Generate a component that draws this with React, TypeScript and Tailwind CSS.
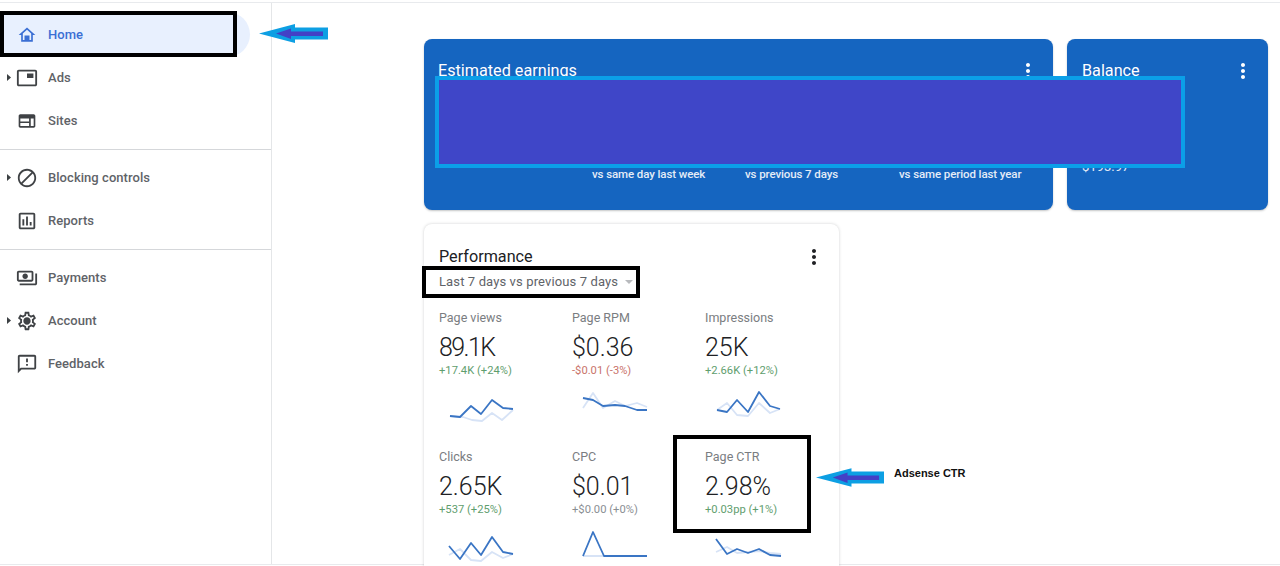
const P = {
  home: "M12 3L2 12h3v8h14v-8h3L12 3zm0 2.69l5 4.5V18H7v-7.81l5-4.5zM9 12.5h6V18H9z",
  ads: "M19 7h-7v5h7V7zm2-4H3c-1.1 0-2 .9-2 2v14c0 1.1.9 1.98 2 1.98h18c1.1 0 2-.88 2-1.98V5c0-1.1-.9-2-2-2zm0 16.01H3V4.98h18v14.03z",
  sites: "M20 4H4c-1.1 0-1.99.9-1.99 2L2 18c0 1.1.9 2 2 2h16c1.1 0 2-.9 2-2V6c0-1.1-.9-2-2-2zM4 9h10.5v3.5H4V9zm0 5.5h10.5V18H4v-3.5zM20 18h-3.5V9H20v9z",
  block: "M12 2C6.48 2 2 6.48 2 12s4.48 10 10 10 10-4.48 10-10S17.52 2 12 2zM4 12c0-4.42 3.58-8 8-8 1.85 0 3.55.63 4.9 1.69L5.69 16.9C4.63 15.55 4 13.85 4 12zm8 8c-1.85 0-3.55-.63-4.9-1.69L18.31 7.1C19.37 8.45 20 10.15 20 12c0 4.42-3.58 8-8 8z",
  reports: "M19 3H5c-1.1 0-2 .9-2 2v14c0 1.1.9 2 2 2h14c1.1 0 2-.9 2-2V5c0-1.1-.9-2-2-2zm0 16H5V5h14v14zM7 10h2v7H7zm4-3h2v10h-2zm4 6h2v4h-2z",
  payments: "M19 14V6c0-1.1-.9-2-2-2H3c-1.1 0-2 .9-2 2v8c0 1.1.9 2 2 2h14c1.1 0 2-.9 2-2zm-2 0H3V6h14v8zm-7-7c-1.66 0-3 1.34-3 3s1.34 3 3 3 3-1.34 3-3-1.34-3-3-3zm13 0v11c0 1.1-.9 2-2 2H4v-2h17V7h2z",
  account: "M19.43 12.98c.04-.32.07-.64.07-.98 0-.34-.03-.66-.07-.98l2.11-1.65c.19-.15.24-.42.12-.64l-2-3.46c-.09-.16-.26-.25-.44-.25-.06 0-.12.01-.17.03l-2.49 1c-.52-.4-1.08-.73-1.69-.98l-.38-2.65C14.46 2.18 14.25 2 14 2h-4c-.25 0-.46.18-.49.42l-.38 2.65c-.61.25-1.17.59-1.69.98l-2.49-1c-.06-.02-.12-.03-.18-.03-.17 0-.34.09-.43.25l-2 3.46c-.13.22-.07.49.12.64l2.11 1.65c-.04.32-.07.65-.07.98 0 .33.03.66.07.98l-2.11 1.65c-.19.15-.24.42-.12.64l2 3.46c.09.16.26.25.44.25.06 0 .12-.01.17-.03l2.49-1c.52.4 1.08.73 1.69.98l.38 2.65c.03.24.24.42.49.42h4c.25 0 .46-.18.49-.42l.38-2.65c.61-.25 1.17-.59 1.69-.98l2.49 1c.06.02.12.03.18.03.17 0 .34-.09.43-.25l2-3.46c.12-.22.07-.49-.12-.64l-2.11-1.65zm-1.98-1.71c.04.31.05.52.05.73 0 .21-.02.43-.05.73l-.14 1.13.89.7 1.08.84-.7 1.21-1.27-.51-1.04-.42-.9.68c-.43.32-.84.56-1.25.73l-1.06.43-.16 1.13-.2 1.35h-1.4l-.19-1.35-.16-1.13-1.06-.43c-.43-.18-.83-.41-1.23-.71l-.91-.7-1.06.43-1.27.51-.7-1.21 1.08-.84.89-.7-.14-1.13c-.03-.31-.05-.54-.05-.74s.02-.43.05-.73l.14-1.13-.89-.7-1.08-.84.7-1.21 1.27.51 1.04.42.9-.68c.43-.32.84-.56 1.25-.73l1.06-.43.16-1.13.2-1.35h1.39l.19 1.35.16 1.13 1.06.43c.43.18.83.41 1.23.71l.91.7 1.06-.43 1.27-.51.7 1.21-1.07.85-.89.7.14 1.13zM12 8c-2.21 0-4 1.79-4 4s1.79 4 4 4 4-1.79 4-4-1.79-4-4-4z",
  feedback: "M20 2H4c-1.1 0-1.99.9-1.99 2L2 22l4-4h14c1.1 0 2-.9 2-2V4c0-1.1-.9-2-2-2zm0 14H5.17L4 17.17V4h16v12zm-9-4h2v2h-2zm0-6h2v4h-2z",
  dots: "M12 8c1.1 0 2-.9 2-2s-.9-2-2-2-2 .9-2 2 .9 2 2 2zm0 2c-1.1 0-2 .9-2 2s.9 2 2 2 2-.9 2-2-.9-2-2-2zm0 6c-1.1 0-2 .9-2 2s.9 2 2 2 2-.9 2-2-.9-2-2-2z",
};

function Icon({ d, className }: { d: string; className: string }) {
  return (
    <svg viewBox="0 0 24 24" fill="currentColor" className={className}>
      <path d={d} fillRule="evenodd" />
    </svg>
  );
}

function NavRow({ icon, label, caret, active, small }: { icon: string; label: string; caret?: boolean; active?: boolean; small?: boolean }) {
  const iconColor = active ? "" : " text-[#3f4245]";
  return (
    <div className={active ? "-my-px flex h-[45px] w-[250px] items-center rounded-r-full bg-[#e8f0fe] text-[#3b6fd4]" : "flex h-[43px] items-center text-[#5f6368]"}>
      <div className="flex w-[16px] shrink-0 justify-end pr-[5px]">
        {caret && (
          <svg viewBox="0 0 4 7" className="h-[7px] w-[4px] text-[#3c4043]" fill="currentColor">
            <path d="M0 0l4 3.5L0 7z" />
          </svg>
        )}
      </div>
      <Icon d={icon} className={(small ? "mx-px h-[20px] w-[20px] shrink-0" : "h-[22px] w-[22px] shrink-0") + iconColor} />
      <span className="ml-[10px] text-[13px] font-medium tracking-[0.05px]">{label}</span>
    </div>
  );
}

type Metric = {
  label: string;
  value: string;
  delta: string;
  tone: string;
  dark: string;
  light: string;
  valueClass?: string;
};

const metrics: Metric[] = [
  {
    label: "Page views", value: "89.1K", delta: "+17.4K (+24%)", tone: "text-[#5f9e6e]", valueClass: "tracking-[-1.6px]",
    dark: "11,28 21,29 32,18 42,26 53,12 64,20 74,21",
    light: "11,28 24,29 33,32 43,33 53,25 63,32 74,22",
  },
  {
    label: "Page RPM", value: "$0.36", delta: "-$0.01 (-3%)", tone: "text-[#c9736a]",
    dark: "11,10 21,12 31,18 43,17 53,18 65,22 75,22",
    light: "11,20 21,5 31,20 43,13 53,18 65,15 75,19",
  },
  {
    label: "Impressions", value: "25K", delta: "+2.66K (+12%)", tone: "text-[#5f9e6e]",
    dark: "12,22 22,24 32,12 43,24 54,4 65,18 75,21",
    light: "12,22 22,15 32,27 43,28 54,15 65,25 75,21",
  },
  {
    label: "Clicks", value: "2.65K", delta: "+537 (+25%)", tone: "text-[#5f9e6e]",
    dark: "10,19 21,32 32,16 42,28 53,10 64,25 74,27",
    light: "10,28 21,22 32,33 42,34 53,25 64,31 74,27",
  },
  {
    label: "CPC", value: "$0.01", delta: "+$0.00 (+0%)", tone: "text-[#8a8e93]",
    dark: "11,29 21,5 32,29 75,29",
    light: "11,29 32,29 75,29",
  },
  {
    label: "Page CTR", value: "2.98%", delta: "+0.03pp (+1%)", tone: "text-[#5f9e6e]",
    dark: "11,12 22,27 32,22 43,26 54,22 65,28 76,29",
    light: "11,25 22,20 32,26 43,25 54,24 65,26 76,27",
  },
];

function MetricCell({ m }: { m: Metric }) {
  return (
    <div className="flex h-[139px] flex-col">
      <div className="h-[18px] text-[12.5px] leading-[18px] text-[#7a7d81]">{m.label}</div>
      <div className={"mt-[6px] h-[30px] text-[25px] font-light leading-[30px] text-[#202124] " + (m.valueClass ?? "")}>{m.value}</div>
      <div className={"mt-px h-[14px] text-[11.2px] leading-[14px] " + m.tone}>{m.delta}</div>
      <svg viewBox="0 0 110 36" className="mt-[10px] h-[36px] w-[110px]" fill="none" strokeLinejoin="round">
        <polyline points={m.light} stroke="#d7e3f6" strokeWidth="1.8" />
        <polyline points={m.dark} stroke="#3a75c4" strokeWidth="1.8" />
      </svg>
    </div>
  );
}

function Arrow({ className }: { className: string }) {
  return (
    <svg viewBox="0 0 69 19" className={className}>
      <path d="M0 9.5L36 0v3.5h33v12H36V19z" fill="#0d9fe3" />
      <path d="M17 9.5L32 4.5v3h32v4.5H32v3z" fill="#4340c6" />
    </svg>
  );
}

export default function App() {
  return (
    <div className="relative h-[566px] w-[1280px] overflow-hidden bg-white font-['Roboto',sans-serif]">
      <div className="mt-[2px] flex h-[563px] border-y border-[#e8eaed]">
        <aside className="h-full w-[272px] shrink-0 border-r border-[#e4e6e8] pt-[10px]">
          <NavRow icon={P.home} label="Home" active small />
          <NavRow icon={P.ads} label="Ads" caret />
          <NavRow icon={P.sites} label="Sites" small />
          <div className="mb-[6px] mt-[7px] border-t border-[#d5d7da]" />
          <NavRow icon={P.block} label="Blocking controls" caret />
          <NavRow icon={P.reports} label="Reports" />
          <div className="mb-[6px] mt-[7px] border-t border-[#d5d7da]" />
          <NavRow icon={P.payments} label="Payments" />
          <NavRow icon={P.account} label="Account" caret />
          <NavRow icon={P.feedback} label="Feedback" />
        </aside>

        <main className="min-w-0 flex-1 pl-[152px] pr-[12px] pt-[36px]">
          <div className="flex gap-[14px]">
            <section className="relative flex h-[171px] w-[629px] flex-col rounded-lg bg-[#1565c0] pl-[14px] pr-[13px] pt-[20px] text-white shadow-[0_1px_2px_rgba(60,64,67,0.3)]">
              <div className="flex items-center justify-between">
                <h2 className="text-[16.2px] leading-[20px]">Estimated earnings</h2>
                <Icon d={P.dots} className="h-[24px] w-[24px]" />
              </div>
              <div className="mt-[83px] flex pl-[154px] text-[11.5px] font-medium leading-[16px] tracking-[-0.1px] text-[#e4ecf7]">
                <span className="w-[153px]">vs same day last week</span>
                <span className="w-[154px]">vs previous 7 days</span>
                <span>vs same period last year</span>
              </div>
            </section>
            <section className="h-[171px] w-[201px] rounded-lg bg-[#1565c0] pl-[15px] pr-[13px] pt-[20px] text-white shadow-[0_1px_2px_rgba(60,64,67,0.3)]">
              <div className="flex items-center justify-between">
                <h2 className="text-[16.2px] leading-[20px]">Balance</h2>
                <Icon d={P.dots} className="h-[24px] w-[24px]" />
              </div>
              <div className="mt-[77px] text-[13px] leading-[14px] text-[#e4ecf7]">$193.97</div>
            </section>
          </div>

          <section className="mt-[14px] h-[360px] w-[415px] rounded-lg bg-white pl-[15px] pr-[13px] pt-[23px] shadow-[0_0_3px_rgba(60,64,67,0.25)]">
            <div className="flex h-[20px] items-center justify-between">
              <h2 className="text-[16.2px] leading-[20px] text-[#202124]">Performance</h2>
              <Icon d={P.dots} className="h-[24px] w-[24px] text-[#202124]" />
            </div>
            <div className="mt-[5px] flex h-[20px] items-center text-[13px] tracking-[0.12px] text-[#5f6368]">
              <span>Last 7 days vs previous 7 days</span>
              <span className="ml-[7px] h-0 w-0 border-x-[4px] border-t-[4px] border-x-transparent border-t-[#b8babd]" />
            </div>
            <div className="mt-[17px] grid grid-cols-[133px_133px_133px]">
              {metrics.map((m) => (
                <MetricCell key={m.label} m={m} />
              ))}
            </div>
          </section>
        </main>
      </div>

      {/* Annotations drawn over the screenshot */}
      <div className="absolute left-0 top-[11px] h-[46px] w-[237px] border-[4px] border-black" />
      <Arrow className="absolute left-[259px] top-[24px] h-[19px] w-[69px]" />
      <div className="absolute left-[435px] top-[76px] h-[92px] w-[750px] border-[4px] border-[#0b9fe8] bg-[#3f46c8]" />
      <div className="absolute left-[422px] top-[266px] h-[32px] w-[218px] border-[4px] border-black" />
      <div className="absolute left-[673px] top-[435px] h-[98px] w-[138px] border-[4px] border-black" />
      <Arrow className="absolute left-[816px] top-[468px] h-[19px] w-[68px]" />
      <div className="absolute left-[894px] top-[466px] font-['Liberation_Sans',sans-serif] text-[11px] font-bold leading-[14px] text-[#111]">Adsense CTR</div>
    </div>
  );
}
